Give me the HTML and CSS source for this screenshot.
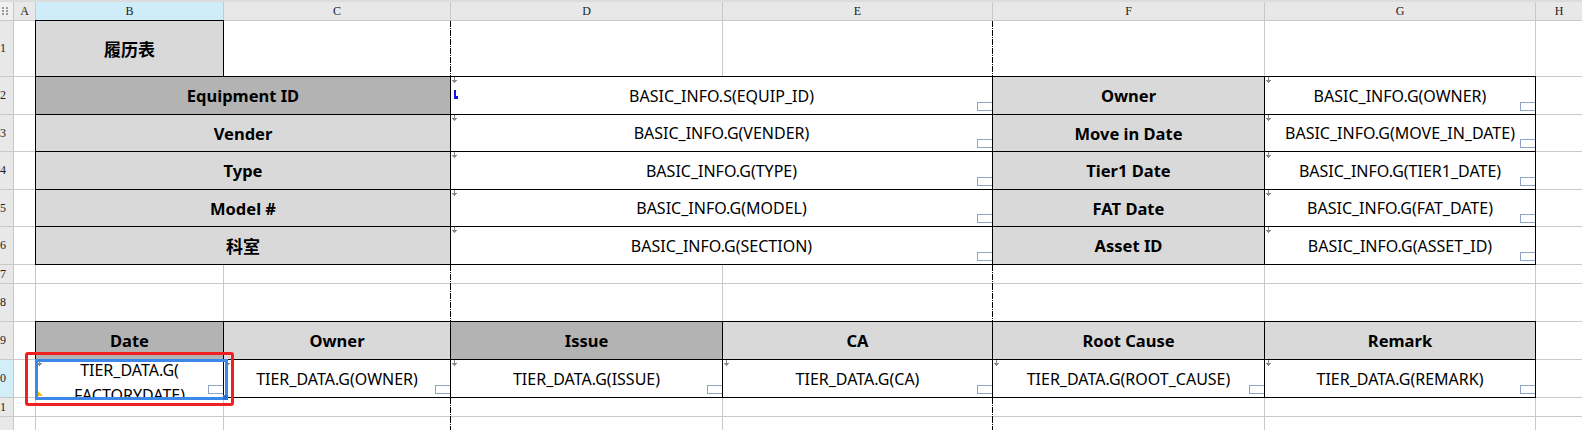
FILE: index.html
```html
<!DOCTYPE html>
<html>
<head>
<meta charset="utf-8">
<link rel="stylesheet" href="styles.css">
</head>
<body>
<div class="topband"></div>
<div class="sheet">
  <!-- header row -->
  <div class="corner"><svg width="6" height="8" viewBox="0 0 6 8"><g fill="#9a9a9a"><rect x="0" y="0" width="2" height="2"/><rect x="4" y="0" width="2" height="2"/><rect x="0" y="3" width="2" height="2"/><rect x="4" y="3" width="2" height="2"/><rect x="0" y="6" width="2" height="2"/><rect x="4" y="6" width="2" height="2"/></g></svg></div>
  <div class="h">A</div>
  <div class="h hsel">B</div>
  <div class="h">C</div>
  <div class="h">D</div>
  <div class="h">E</div>
  <div class="h">F</div>
  <div class="h">G</div>
  <div class="h last">H</div>

  <!-- row 1 -->
  <div class="rn">1</div>
  <div class="c"></div>
  <div class="c b lab cjk">履历表</div>
  <div class="c pb"></div>
  <div class="c"></div>
  <div class="c pb"></div>
  <div class="c"></div>
  <div class="c"></div>
  <div class="c last"></div>

  <!-- row 2 -->
  <div class="rn">2</div>
  <div class="c"></div>
  <div class="c b lab dark span2">Equipment ID</div>
  <div class="c b val span2"><span class="arr"></span><span class="mark"></span>BASIC_INFO.S(EQUIP_ID)<span class="hnd"></span></div>
  <div class="c b lab">Owner</div>
  <div class="c b val"><span class="arr"></span>BASIC_INFO.G(OWNER)<span class="hnd"></span></div>
  <div class="c last"></div>

  <!-- row 3 -->
  <div class="rn">3</div>
  <div class="c"></div>
  <div class="c b lab span2">Vender</div>
  <div class="c b val span2"><span class="arr"></span>BASIC_INFO.G(VENDER)<span class="hnd"></span></div>
  <div class="c b lab">Move in Date</div>
  <div class="c b val"><span class="arr"></span>BASIC_INFO.G(MOVE_IN_DATE)<span class="hnd"></span></div>
  <div class="c last"></div>

  <!-- row 4 -->
  <div class="rn">4</div>
  <div class="c"></div>
  <div class="c b lab span2">Type</div>
  <div class="c b val span2"><span class="arr"></span>BASIC_INFO.G(TYPE)<span class="hnd"></span></div>
  <div class="c b lab">Tier1 Date</div>
  <div class="c b val"><span class="arr"></span>BASIC_INFO.G(TIER1_DATE)<span class="hnd"></span></div>
  <div class="c last"></div>

  <!-- row 5 -->
  <div class="rn">5</div>
  <div class="c"></div>
  <div class="c b lab span2">Model #</div>
  <div class="c b val span2"><span class="arr"></span>BASIC_INFO.G(MODEL)<span class="hnd"></span></div>
  <div class="c b lab">FAT Date</div>
  <div class="c b val"><span class="arr"></span>BASIC_INFO.G(FAT_DATE)<span class="hnd"></span></div>
  <div class="c last"></div>

  <!-- row 6 -->
  <div class="rn">6</div>
  <div class="c"></div>
  <div class="c b lab span2 cjk">科室</div>
  <div class="c b val span2"><span class="arr"></span>BASIC_INFO.G(SECTION)<span class="hnd"></span></div>
  <div class="c b lab">Asset ID</div>
  <div class="c b val"><span class="arr"></span>BASIC_INFO.G(ASSET_ID)<span class="hnd"></span></div>
  <div class="c last"></div>

  <!-- row 7 -->
  <div class="rn">7</div>
  <div class="c"></div>
  <div class="c"></div>
  <div class="c pb"></div>
  <div class="c"></div>
  <div class="c pb"></div>
  <div class="c"></div>
  <div class="c"></div>
  <div class="c last"></div>

  <!-- row 8 -->
  <div class="rn">8</div>
  <div class="c"></div>
  <div class="c"></div>
  <div class="c pb"></div>
  <div class="c"></div>
  <div class="c pb"></div>
  <div class="c"></div>
  <div class="c"></div>
  <div class="c last"></div>

  <!-- row 9 -->
  <div class="rn">9</div>
  <div class="c"></div>
  <div class="c b lab dark">Date</div>
  <div class="c b lab">Owner</div>
  <div class="c b lab dark">Issue</div>
  <div class="c b lab">CA</div>
  <div class="c b lab">Root Cause</div>
  <div class="c b lab">Remark</div>
  <div class="c last"></div>

  <!-- row 10 -->
  <div class="rn rnsel">10</div>
  <div class="c"></div>
  <div class="c b val selcell"><span class="arr"></span><div class="wrap">TIER_DATA.G(<wbr>FACTORYDATE)</div><span class="hnd"></span><span class="tri"></span><span class="sel"><span class="fill"></span></span><span class="red"></span></div>
  <div class="c b val"><span class="arr"></span>TIER_DATA.G(OWNER)<span class="hnd"></span></div>
  <div class="c b val"><span class="arr"></span>TIER_DATA.G(ISSUE)<span class="hnd"></span></div>
  <div class="c b val"><span class="arr"></span>TIER_DATA.G(CA)<span class="hnd"></span></div>
  <div class="c b val"><span class="arr"></span>TIER_DATA.G(ROOT_CAUSE)<span class="hnd"></span></div>
  <div class="c b val"><span class="arr"></span>TIER_DATA.G(REMARK)<span class="hnd"></span></div>
  <div class="c last"></div>

  <!-- row 11 -->
  <div class="rn">11</div>
  <div class="c"></div>
  <div class="c"></div>
  <div class="c pb"></div>
  <div class="c"></div>
  <div class="c pb"></div>
  <div class="c"></div>
  <div class="c"></div>
  <div class="c last"></div>

  <!-- row 12 -->
  <div class="rn"></div>
  <div class="c"></div>
  <div class="c"></div>
  <div class="c pb"></div>
  <div class="c"></div>
  <div class="c pb"></div>
  <div class="c"></div>
  <div class="c"></div>
  <div class="c last"></div>
</div>
</body>
</html>
```

FILE: styles.css
```css
html, body {
  margin: 0;
  padding: 0;
  background: #ffffff;
  overflow: hidden;
  width: 1582px;
  height: 430px;
}

.topband {
  height: 2px;
  background: #dcdcdc;
}

.sheet {
  display: grid;
  grid-template-columns: 14px 22px 188px 227px 272px 270px 272px 271px 1fr;
  grid-template-rows: 19px 56px 38px 37px 38px 37px 38px 19px 38px 38px 38px 19px 19px;
  width: 1582px;
  font-family: "Noto Sans", "Noto Sans CJK SC", sans-serif;
  font-size: 16px;
  color: #000;
}

.sheet > div {
  box-sizing: border-box;
  min-width: 0;
  min-height: 0;
}

.corner {
  background: #f0f0f0;
  border-right: 1px solid #c8c8c8;
  border-bottom: 1px solid #c8c8c8;
  display: flex;
  align-items: center;
  padding-left: 2px;
}

.h {
  background: #e8e8e8;
  border-right: 1px solid #c8c8c8;
  border-bottom: 1px solid #c8c8c8;
  font-family: "Liberation Serif", serif;
  font-size: 12px;
  color: #222;
  display: flex;
  align-items: center;
  justify-content: center;
}

.hsel {
  background: #cfedf8;
}

.rn {
  background: #e8e8e8;
  border-right: 1px solid #c8c8c8;
  border-bottom: 1px solid #c8c8c8;
  font-family: "Liberation Serif", serif;
  font-size: 12px;
  color: #222;
  display: flex;
  align-items: center;
  justify-content: flex-end;
  padding-right: 7px;
  overflow: hidden;
}

.rnsel {
  background: #d2eef9;
}

.c {
  border-right: 1px solid #c9c9c9;
  border-bottom: 1px solid #c9c9c9;
  display: flex;
  align-items: center;
  justify-content: center;
  text-align: center;
  white-space: nowrap;
  position: relative;
}

.sheet > .last {
  border-right: none;
}

.b {
  border: 1px solid #000;
  margin: -1px 0 0 -1px;
}

.span2 {
  grid-column: span 2;
}

.lab {
  background: #d9d9d9;
  font-weight: 700;
  font-size: 16.5px;
}

.dark {
  background: #b3b3b3;
}

.cjk {
  font-size: 17px;
}

.val {
  background: #ffffff;
}

.pb::after {
  content: "";
  position: absolute;
  top: 0;
  bottom: -1px;
  right: -1px;
  width: 1px;
  background: repeating-linear-gradient(to bottom, #000 0 6px, #fff 6px 7px, #000 7px 8px, #fff 8px 9px);
}

.arr {
  position: absolute;
  left: 1px;
  top: 0;
  width: 5px;
  height: 6px;
  background:
    linear-gradient(#8a8a8a, #8a8a8a) 2px 0 / 1px 6px no-repeat,
    linear-gradient(#8a8a8a, #8a8a8a) 0 3px / 5px 1px no-repeat,
    linear-gradient(#8a8a8a, #8a8a8a) 1px 4px / 3px 1px no-repeat;
}

.mark {
  position: absolute;
  left: 3px;
  top: 13px;
  width: 2px;
  height: 9px;
  background: #1414e6;
}

.mark::after {
  content: "";
  position: absolute;
  left: 0;
  bottom: 0;
  width: 4px;
  height: 3px;
  background: #1414e6;
}

.hnd {
  position: absolute;
  right: 0;
  bottom: 3px;
  width: 15px;
  height: 9px;
  border: 1px solid #8fa2c7;
  border-right: none;
  box-sizing: border-box;
}

.selcell {
  align-items: flex-start;
}

.wrap {
  white-space: normal;
  line-height: 25px;
  margin-top: -2px;
  height: 39px;
  box-sizing: border-box;
  overflow: hidden;
  width: 100%;
  text-align: center;
}

.tri {
  position: absolute;
  left: 1px;
  bottom: 1px;
  width: 0;
  height: 0;
  border-bottom: 6px solid #f0c000;
  border-right: 6px solid transparent;
}

.sel {
  position: absolute;
  left: -1px;
  top: -1px;
  right: -5px;
  bottom: -3px;
  border: 3px solid #3c87ea;
  z-index: 3;
}

.fill {
  position: absolute;
  right: -3px;
  bottom: -3px;
  width: 5px;
  height: 5px;
  background: #2a72d6;
}

.red {
  position: absolute;
  left: -11px;
  top: -8px;
  right: -11px;
  bottom: -9px;
  border: 3px solid #f02020;
  border-radius: 3px;
  z-index: 4;
}
```
